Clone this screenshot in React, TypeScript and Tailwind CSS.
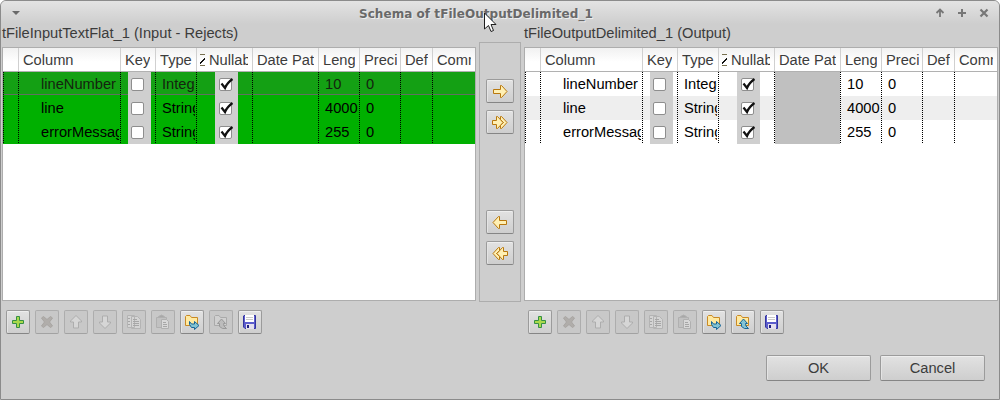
import type { ReactNode } from 'react';

const COLS = 'grid grid-cols-[16px_102px_35px_41px_56px_66px_41px_41px_32px_42px]';
const HEADERS = ['', 'Column', 'Key', 'Type', 'Nullable', 'Date Pattern', 'Length', 'Precision', 'Default', 'Comment'];
const ROWS = [
  ['lineNumber', 'Integer', '10'],
  ['line', 'String', '4000'],
  ['errorMessage', 'String', '255'],
];

function Dots() {
  return <span className="w-px shrink-0 self-stretch bg-[repeating-linear-gradient(to_bottom,#000_0_1px,transparent_1px_2px)]" />;
}

function Check({ on }: { on?: boolean }) {
  return (
    <span className={`flex h-6 w-[23px] shrink-0 items-center bg-[#cfcfcf] ${on ? 'pl-1' : 'pl-[3px]'}`}>
      <svg width="17" height="18" viewBox="0 0 17 18" className="-mt-[3px]">
        <rect x=".5" y="4.500" width="12" height="12" rx="1.500" fill="#fff" stroke="#8e8e8e" />
        {on && <path d="M2.500 9.500l3.500 4.500Q8 9 13.500 5" fill="none" stroke="#111" strokeWidth="2.200" />}
      </svg>
    </span>
  );
}

function Cell({ children, pad, last }: { children?: ReactNode; pad: string; last?: boolean }) {
  const text = typeof children === 'string';
  return (
    <div className="flex min-w-0 overflow-hidden">
      <div className={`flex min-w-0 flex-1 items-center overflow-hidden whitespace-nowrap ${pad} ${text ? 'mr-px pt-px' : ''}`}>{children}</div>
      {!last && <Dots />}
    </div>
  );
}

function SortMark() {
  return (
    <svg width="6" height="13" viewBox="0 0 6 13" className="mr-[3px] shrink-0" shapeRendering="crispEdges">
      <path d="M0 .5h5M0 11.500h5" stroke="#77704f" />
      <path d="M0 9.500h1M0 8.500h2M1 7.500h2M2 6.500h2M3 5.500h2M4 4.500h1" stroke="#111" />
    </svg>
  );
}

function Table({ green }: { green?: boolean }) {
  return (
    <div className="h-[254px] w-[474px] border border-[#adadad] bg-white">
      <div className={`${COLS} h-6 w-[472px] border-b border-[#b1b1b1] bg-linear-to-b from-[#f1f1f1] to-white to-60% text-[#3c3c3c]`}>
        {HEADERS.map((h, i) => (
          <div key={i} className={`flex min-w-0 items-center overflow-hidden pt-[2px] whitespace-nowrap ${i < 9 ? 'border-r border-[#d0d0d0]' : ''} ${i === 2 || i === 3 ? '' : i === 7 ? 'pr-[3px]' : 'pr-1'} ${i === 4 ? 'pl-[3px]' : 'pl-1'}`}>
            {i === 4 && <SortMark />}
            <span className="min-w-0 overflow-hidden">{h}</span>
          </div>
        ))}
      </div>
      {ROWS.map(([name, type, len], i) => {
        const bg = green ? (i === 0 ? 'bg-[#14a014] text-[#14240f]' : 'bg-[#00b000] text-black') : i === 1 ? 'bg-[#eeeeee] text-black' : 'bg-white text-black';
        return (
          <div key={name} className={`${COLS} h-6 w-[472px] ${bg} ${green && i === 0 ? 'shadow-[inset_0_-1px_0_#00b000,inset_0_-2px_0_#607060]' : ''}`}>
            <div className="flex justify-between"><Dots /><Dots /></div>
            <Cell pad="pl-[22px]">{name}</Cell>
            <Cell pad="pl-[7px]"><Check /></Cell>
            <Cell pad="pl-1.5">{type}</Cell>
            <Cell pad="pl-[18px]"><Check on /></Cell>
            <Cell pad={green ? '' : 'bg-[#c0c0c0]'} />
            <Cell pad="pl-1.5">{len}</Cell>
            <Cell pad="pl-1.5">0</Cell>
            <Cell pad="" />
            <Cell pad="" last />
          </div>
        );
      })}
    </div>
  );
}

const BTN = 'flex items-center justify-center rounded-[2px] border border-[#9b9b9b] border-b-[#858585] bg-linear-to-b from-[#e2e2e2] to-[#cecece] shadow-[inset_0_1px_0_#eeeeee,inset_1px_0_0_#e4e4e4]';
const BTN_OFF = 'flex items-center justify-center rounded-[2px] border border-[#adadad] border-b-[#a2a2a2] bg-[#c8c8c8]';

function Gold({ left, double }: { left?: boolean; double?: boolean }) {
  return (
    <svg width="16" height="16" viewBox="0 0 16 16" className={left ? '-scale-x-100' : ''}>
      {double ? (
        <g fill="#fff0b4" stroke="#b8780f">
          <path d="M8.500 5.500v-3h1l5.500 6-5.500 6h-1v-3l3-3z" />
          <path d="M.5 6.500h4v-4h1l5.500 6-5.500 6h-1v-4h-4z" />
        </g>
      ) : (
        <path d="M1.500 6.500h7v-4h1l5.500 6-5.500 6h-1v-4h-7z" fill="#fff0b4" stroke="#b8780f" />
      )}
    </svg>
  );
}

function Glyph({ name, off }: { name: string; off?: boolean }) {
  const folder = (
    <path d="M1.500 11.500v-9l1-1h3.500l1.500 2h6v8z" fill={off ? '#d0d0d0' : '#ffe9a0'} stroke={off ? '#aaa' : '#c98a25'} />
  );
  const art: Record<string, ReactNode> = {
    add: <path d="M6.500 2.500h3v4h4v3h-4v4h-3v-4h-4v-3h4z" fill="#a9d94b" stroke="#359044" />,
    del: <path d="M2.500 4l2-1.500L8 5.500l3.500-3 2 1.500-3 4 3 4-2 1.500L8 10.500l-3.500 3-2-1.500 3-4z" fill="#b0adaa" stroke="#a8a5a2" />,
    up: <path d="M8 1.500l5.500 5.500v1h-3v6h-5v-6h-3v-1z" fill="#d6d6d6" stroke="#adadad" />,
    down: <path d="M8 14.500l5.500-5.500v-1h-3v-6h-5v6h-3v1z" fill="#d6d6d6" stroke="#adadad" />,
    copy: (
      <g stroke="#b4b4b4" fill="#d4d4d4">
        <path d="M1.500 1.500h7v12h-7zM5.500 2.500h6l3 3v9h-9z" />
        <path d="M2 4.500h2M2 7.500h2M2 10.500h2M7 5.500h4M7 7.500h6M7 9.500h6M7 11.500h6" stroke="#a6a6a6" />
      </g>
    ),
    paste: (
      <g stroke="#b0b0b0" fill="#c1c1c1">
        <path d="M1.500 3.500h10v10h-10z" />
        <path d="M3.500 3.500v-1l3-1.500 3 1.500v1z" fill="#a8a8a8" />
        <path d="M6.500 5.500h5l2 2v7h-7z" fill="#d8d8d8" />
        <path d="M8 8.500h3M8 10.500h4M8 12.500h4" stroke="#a6a6a6" />
      </g>
    ),
    out: (
      <g>
        {folder}
        <path d="M5.500 7.500l2 2.500h3v-2.500l4.500 4-4.500 4v-2H7.500l-2-3z" fill="#83c4d4" stroke="#176597" />
      </g>
    ),
    in: (
      <g>
        {folder}
        <path d="M8.500 5l4 4.500h-2l.5 2.500 2.500 2.500h-4l-3-2v-3H4.500z" fill={off ? '#bcbcbc' : '#83c4d4'} stroke={off ? '#999' : '#176597'} />
      </g>
    ),
    save: (
      <g>
        <path d="M2 1.500h11.500v13H3L1.500 13V2z" fill="#5c5dcc" stroke="#3434a0" />
        <path d="M3 1h9v7H3z" fill="#fff" />
        <path d="M4 3.500h7M4 5.500h7" stroke="#c9c9c9" />
        <path d="M4 10h8v5H4z" fill="#e4e0ee" />
        <path d="M5 11h2v3H5z" fill="#202080" />
      </g>
    ),
  };
  return <svg width="16" height="16" viewBox="0 0 16 16">{art[name]}</svg>;
}

function Toolbar({ lastOff }: { lastOff?: boolean }) {
  return (
    <div className="mt-[9px] flex gap-[5px] pl-1">
      {['add', 'del', 'up', 'down', 'copy', 'paste', 'out', 'in', 'save'].map((n, i) => {
        const off = (i > 0 && i < 6) || (n === 'in' && !!lastOff);
        return (
          <button key={n} className={`h-6 w-6 ${off ? BTN_OFF : BTN}`}>
            <Glyph name={n} off={off} />
          </button>
        );
      })}
    </div>
  );
}

export default function App() {
  return (
    <div className="relative h-[400px] w-[1000px] overflow-hidden rounded-t-[6px] border border-[#8b8b8b] bg-[#cecece] font-['Liberation_Sans',Arial,sans-serif] text-[14.667px] leading-[17px] text-[#3c3c3c]">
      <header className="flex h-[23px] items-center bg-linear-to-b from-[#e3e3e3] to-[#cecece] pr-[10px] pl-[10px]">
        <svg width="10" height="6" viewBox="0 0 10 6" className="mt-px"><path d="M1 1h8L5 5z" fill="#696969" /></svg>
        <h1 className="mt-[4px] ml-[338px] flex-1 whitespace-nowrap font-['DejaVu_Sans',sans-serif] text-[12px] tracking-[0.05px] font-bold text-[#696969] [text-shadow:1px_1px_0_#eeeeee]">Schema of tFileOutputDelimited_1</h1>
        <div className="flex gap-[12px] pt-px">
          <svg width="10" height="10" viewBox="0 0 10 10"><path d="M5 9V2M1.500 5L5 1.500 8.500 5" fill="none" stroke="#777" strokeWidth="1.800" /></svg>
          <svg width="10" height="10" viewBox="0 0 10 10"><path d="M1 5h8M5 1v8" stroke="#777" strokeWidth="2" /></svg>
          <svg width="10" height="10" viewBox="0 0 10 10"><path d="M1.500 1.500l7 7M8.500 1.500l-7 7" stroke="#777" strokeWidth="2.200" /></svg>
        </div>
      </header>
      <main className="flex pl-px">
        <section className="w-[474px]">
          <h2 className="h-[23px] pt-px whitespace-nowrap">tFileInputTextFlat_1 (Input - Rejects)</h2>
          <Table green />
          <Toolbar lastOff />
        </section>
        <div className="mt-[18px] ml-[3px] flex h-[260px] w-[42px] flex-col items-center border border-[#adadad] pt-[36px]">
          <button className={`h-6 w-7 -ml-px ${BTN}`}><Gold /></button>
          <button className={`mt-[7px] h-6 w-7 -ml-px ${BTN}`}><Gold double /></button>
          <button className={`mt-[76px] h-6 w-7 -ml-px ${BTN}`}><Gold left /></button>
          <button className={`mt-[7px] h-6 w-7 -ml-px ${BTN}`}><Gold left double /></button>
        </div>
        <section className="ml-[3px] w-[474px]">
          <h2 className="h-[23px] pt-px whitespace-nowrap">tFileOutputDelimited_1 (Output)</h2>
          <Table />
          <Toolbar />
        </section>
      </main>
      <footer className="mt-[21px] flex justify-end gap-[9px] pr-[14px]">
        <button className={`h-[26px] w-[105px] pt-px ${BTN}`}>OK</button>
        <button className={`h-[26px] w-[105px] pt-px ${BTN}`}>Cancel</button>
      </footer>
      <svg width="14" height="22" viewBox="0 0 14 22" className="absolute top-[11px] left-[482px]">
        <path d="M1.500 1v16l4-3.500 2.500 6 2.500-1-2.500-6h5z" fill="#fff" stroke="#1e1e1e" />
      </svg>
    </div>
  );
}
